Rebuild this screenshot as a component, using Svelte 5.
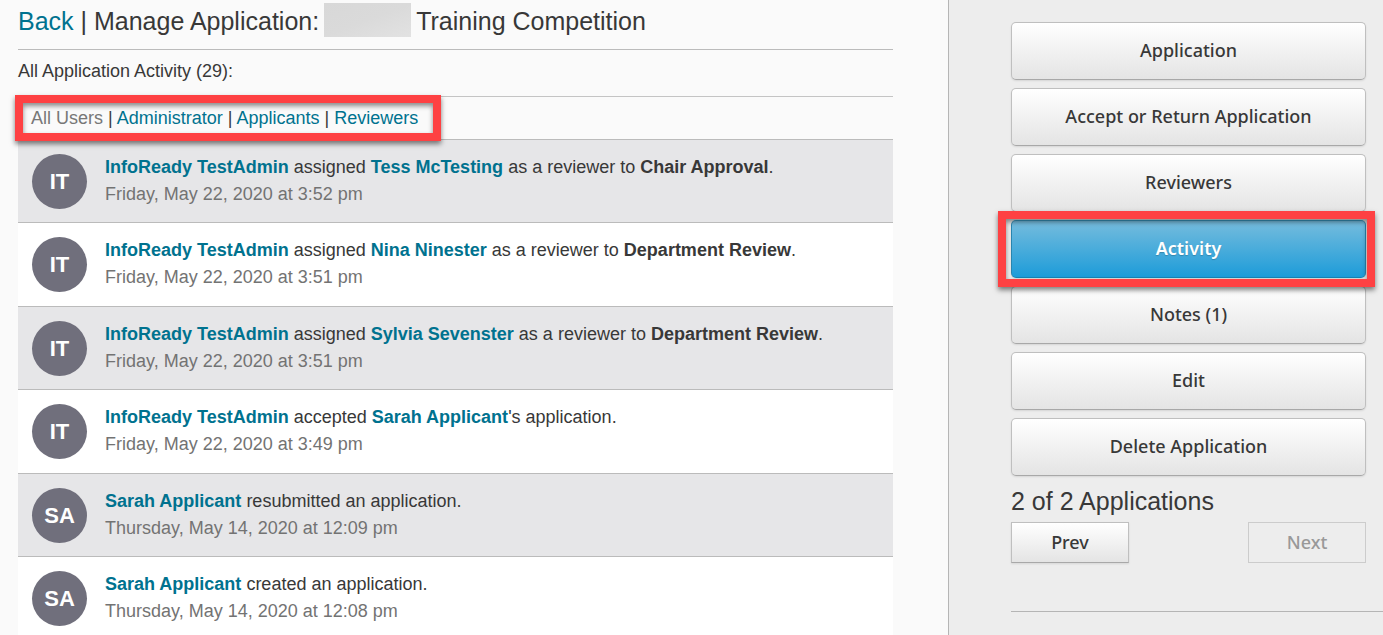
<script>
  const filters = ['Administrator', 'Applicants', 'Reviewers'];

  const entries = [
    { initials: 'IT', who: 'InfoReady TestAdmin', verb: ' assigned ', target: 'Tess McTesting', after: ' as a reviewer to ', step: 'Chair Approval', end: '.', time: 'Friday, May 22, 2020 at 3:52 pm' },
    { initials: 'IT', who: 'InfoReady TestAdmin', verb: ' assigned ', target: 'Nina Ninester', after: ' as a reviewer to ', step: 'Department Review', end: '.', time: 'Friday, May 22, 2020 at 3:51 pm' },
    { initials: 'IT', who: 'InfoReady TestAdmin', verb: ' assigned ', target: 'Sylvia Sevenster', after: ' as a reviewer to ', step: 'Department Review', end: '.', time: 'Friday, May 22, 2020 at 3:51 pm' },
    { initials: 'IT', who: 'InfoReady TestAdmin', verb: ' accepted ', target: 'Sarah Applicant', after: "'s application.", time: 'Friday, May 22, 2020 at 3:49 pm' },
    { initials: 'SA', who: 'Sarah Applicant', verb: ' resubmitted an application.', time: 'Thursday, May 14, 2020 at 12:09 pm' },
    { initials: 'SA', who: 'Sarah Applicant', verb: ' created an application.', time: 'Thursday, May 14, 2020 at 12:08 pm' }
  ];

  const actions = [
    'Application',
    'Accept or Return Application',
    'Reviewers',
    'Activity',
    'Notes (1)',
    'Edit',
    'Delete Application'
  ];

  let current = $state('Activity');
</script>

<div class="page">
  <main>
    <h1><a href="#back">Back</a> | Manage Application:<span class="redacted"></span>Training Competition</h1>
    <p class="count">All Application Activity (29):</p>

    <nav class="filters" aria-label="Activity filter">
      <span class="selected">All Users</span>
      {#each filters as name}
        {' | '}<a href="#{name}">{name}</a>
      {/each}
      <span class="callout" aria-hidden="true"></span>
    </nav>

    <ul class="log">
      {#each entries as e}
        <li>
          <span class="avatar">{e.initials}</span>
          <div>
            <p><a href="#user">{e.who}</a>{e.verb}{#if e.target}<a href="#user">{e.target}</a>{e.after}{/if}{#if e.step}<strong>{e.step}</strong>{e.end}{/if}</p>
            <p class="time">{e.time}</p>
          </div>
        </li>
      {/each}
    </ul>
  </main>

  <aside>
    <div class="actions">
      {#each actions as label}
        <div class="slot">
          <button class="action" class:active={label === current} onclick={() => (current = label)}>{label}</button>
          {#if label === current}<span class="callout" aria-hidden="true"></span>{/if}
        </div>
      {/each}
    </div>
    <h2>2 of 2 Applications</h2>
    <div class="pager">
      <button>Prev</button>
      <button disabled>Next</button>
    </div>
    <hr />
  </aside>
</div>

<style>
  :global(body) {
    background: #fafafa;
  }

  .page {
    display: flex;
    min-height: 100vh;
    box-sizing: border-box;
    overflow: hidden;
    font-family: 'Liberation Sans', Arial, sans-serif;
    font-size: 18px;
    line-height: 27px;
    color: #383838;
  }

  main {
    flex: 1;
    min-width: 0;
    padding: 0 55px 0 18px;
  }

  a {
    color: #00728f;
    text-decoration: none;
  }

  h1,
  h2,
  p,
  ul {
    margin: 0;
    padding: 0;
    font-weight: normal;
  }

  h1 {
    display: flex;
    align-items: center;
    white-space: pre;
    height: 43px;
    padding-bottom: 6px;
    border-bottom: 1px solid #bbb;
    font-size: 25px;
    line-height: 43px;
  }

  .redacted {
    width: 87px;
    height: 34px;
    margin: 0 5px 3px;
    background: linear-gradient(160deg, #d8d8d8, #dadada 50%, #e2e2e2);
  }

  .count {
    padding: 8px 0 11px;
  }

  .filters {
    position: relative;
    padding: 8px 13px 7px;
    border-top: 1px solid #c4c4c4;
  }

  .selected {
    color: #777;
  }

  .callout {
    position: absolute;
    box-sizing: border-box;
    border: 8px solid #fe4143;
    box-shadow:
      0 3px 5px rgba(0, 0, 0, 0.5),
      inset 0 3px 5px rgba(0, 0, 0, 0.45);
    pointer-events: none;
    z-index: 1;
  }

  .filters .callout {
    left: -3px;
    top: -2px;
    width: 426px;
    height: 46px;
  }

  .log {
    list-style: none;
  }

  li {
    display: flex;
    gap: 18px;
    padding: 14px 14px 13px;
    border-top: 1px solid #bbb;
    background: #e6e6e8;
  }

  li:nth-child(even) {
    padding-bottom: 14px;
    background: #fff;
  }

  .avatar {
    flex: none;
    width: 55px;
    height: 55px;
    border-radius: 50%;
    background: #706f7c;
    color: #fff;
    font-size: 22px;
    font-weight: bold;
    line-height: 55px;
    text-align: center;
  }

  li a,
  strong {
    font-weight: bold;
  }

  .time {
    color: #737373;
  }

  aside {
    flex: 0 0 435px;
    box-sizing: border-box;
    padding: 22px 0 0 62px;
    border-left: 1px solid #b5b5b5;
    background: #ededed;
  }

  .actions {
    display: grid;
    gap: 8px;
    margin-right: 17px;
  }

  .slot {
    position: relative;
    display: grid;
  }

  .slot .callout {
    inset: -9px -9px -9px -13px;
  }

  button {
    box-sizing: border-box;
    border: 1px solid #bfbfbf;
    border-bottom-color: #a8a8a8;
    background: linear-gradient(#fff, #e4e4e4);
    box-shadow: 0 1px 2px rgba(0, 0, 0, 0.1);
    color: #383838;
    font-family: 'Noto Sans', 'Open Sans', sans-serif;
    font-size: 18px;
    font-weight: 500;
    line-height: 27px;
  }

  .action {
    padding: 14px 12px 15px;
    border-radius: 5px;
  }

  .action.active {
    border-color: #3a9cc6 #2a86b0 #1585b5;
    background: linear-gradient(#76bcdd, #1d9cd9);
    color: #fff;
    font-weight: 600;
    text-shadow: 0 1px 1px rgba(0, 0, 0, 0.2);
  }

  h2 {
    padding: 7px 0 3px;
    font-size: 25px;
    line-height: 36px;
  }

  .pager {
    display: flex;
    justify-content: space-between;
    margin-right: 17px;
  }

  .pager button {
    width: 118px;
    padding: 6px 0;
  }

  .pager button:disabled {
    border-color: #ccc;
    background: none;
    box-shadow: none;
    color: #999;
  }

  hr {
    margin: 48px 0 0;
    border: 0;
    border-top: 1px solid #b5b5b5;
  }
</style>
